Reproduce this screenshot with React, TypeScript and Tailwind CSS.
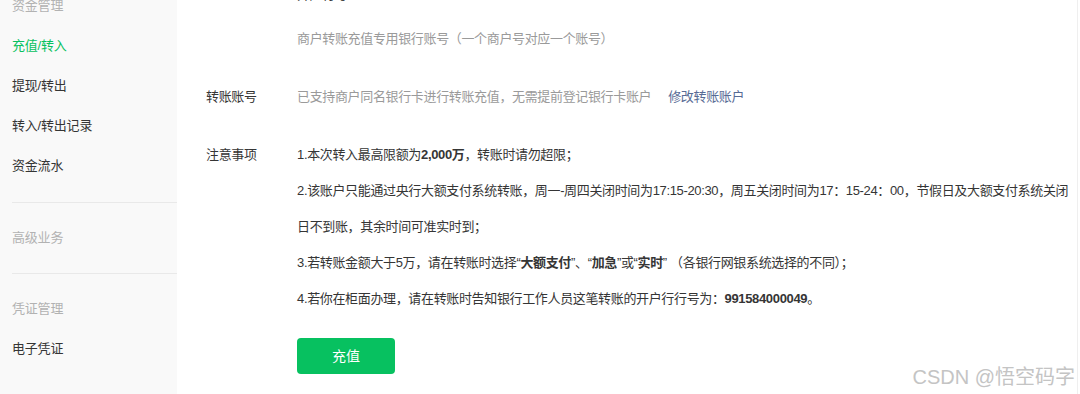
import React from "react";

const font = { fontFamily: '"Microsoft YaHei", "Liberation Sans", "Noto Sans CJK SC", sans-serif' };

function SideItem({ children, tone }: { children: React.ReactNode; tone: "head" | "active" | "normal" }) {
  const cls =
    tone === "head" ? "text-[#b2b2b2]" : tone === "active" ? "text-[#07c160]" : "text-[#353535]";
  return <div className={`h-[40px] leading-[40px] text-[13px] pl-[12px] tracking-[-0.2px] ${cls}`}>{children}</div>;
}

export default function App() {
  return (
    <div className="relative flex w-[1080px] h-[394px] overflow-hidden bg-white" style={font}>
      {/* Sidebar */}
      <div className="w-[177px] shrink-0 bg-[#f9f9f9] flex flex-col">
        <div className="mt-[-14px]">
          <SideItem tone="head">资金管理</SideItem>
          <SideItem tone="active">充值/转入</SideItem>
          <SideItem tone="normal">提现/转出</SideItem>
          <SideItem tone="normal">转入/转出记录</SideItem>
          <SideItem tone="normal">资金流水</SideItem>
        </div>
        <div className="ml-[12px] mt-[16px] h-px bg-[#e9e9e9]" />
        <div className="mt-[15px]">
          <SideItem tone="head">高级业务</SideItem>
        </div>
        <div className="ml-[12px] mt-[15px] h-px bg-[#e9e9e9]" />
        <div className="mt-[15px]">
          <SideItem tone="head">凭证管理</SideItem>
          <SideItem tone="normal">电子凭证</SideItem>
        </div>
      </div>

      {/* Main */}
      <div className="flex-1 min-w-0 pl-[29px] text-[13px] text-[#353535] tracking-[-0.35px]">
        <div className="flex mt-[-15px] leading-[20px]">
          <div className="w-[91px] shrink-0" />
          <div>开户行号</div>
        </div>
        <div className="flex mt-[24px] leading-[20px]">
          <div className="w-[91px] shrink-0" />
          <div className="text-[#9a9a9a]">商户转账充值专用银行账号（一个商户号对应一个账号）</div>
        </div>
        <div className="flex mt-[38px] leading-[20px]">
          <div className="w-[91px] shrink-0">转账账号</div>
          <div className="flex gap-[17px]">
            <span className="text-[#9a9a9a]">已支持商户同名银行卡进行转账充值，无需提前登记银行卡账户</span>
            <span className="text-[#576b95]">修改转账账户</span>
          </div>
        </div>
        <div className="flex mt-[30px] leading-[36px]">
          <div className="w-[91px] shrink-0">注意事项</div>
          <div className="flex flex-col whitespace-nowrap">
            <div>
              1.本次转入最高限额为<b className="font-bold">2,000万</b>，转账时请勿超限；
            </div>
            <div>
              2.该账户只能通过央行大额支付系统转账，周一-周四关闭时间为17:15-20:30，周五关闭时间为17：15-24：00，节假日及大额支付系统关闭
            </div>
            <div>日不到账，其余时间可准实时到；</div>
            <div>
              3.若转账金额大于5万，请在转账时选择“<b className="font-bold">大额支付</b>”、“<b className="font-bold">加急</b>”或“<b className="font-bold">实时</b>” （各银行网银系统选择的不同）；
            </div>
            <div>
              4.若你在柜面办理，请在转账时告知银行工作人员这笔转账的开户行行号为：<b className="font-bold">991584000049</b>。
            </div>
            <div className="mt-[21px]">
              <button className="w-[98px] h-[36px] rounded-[4px] bg-[#07c160] text-white text-[14px] leading-[36px] tracking-normal">
                充值
              </button>
            </div>
          </div>
        </div>
      </div>
      <div className="w-px shrink-0 bg-[#efefef]" />
      <div className="w-[2px] shrink-0 bg-white" />

      {/* Watermark */}
      <div className="absolute right-[5px] top-[364px] text-[20px] leading-[26px] text-[#c4c4c4] whitespace-nowrap">
        CSDN @悟空码字
      </div>
    </div>
  );
}
